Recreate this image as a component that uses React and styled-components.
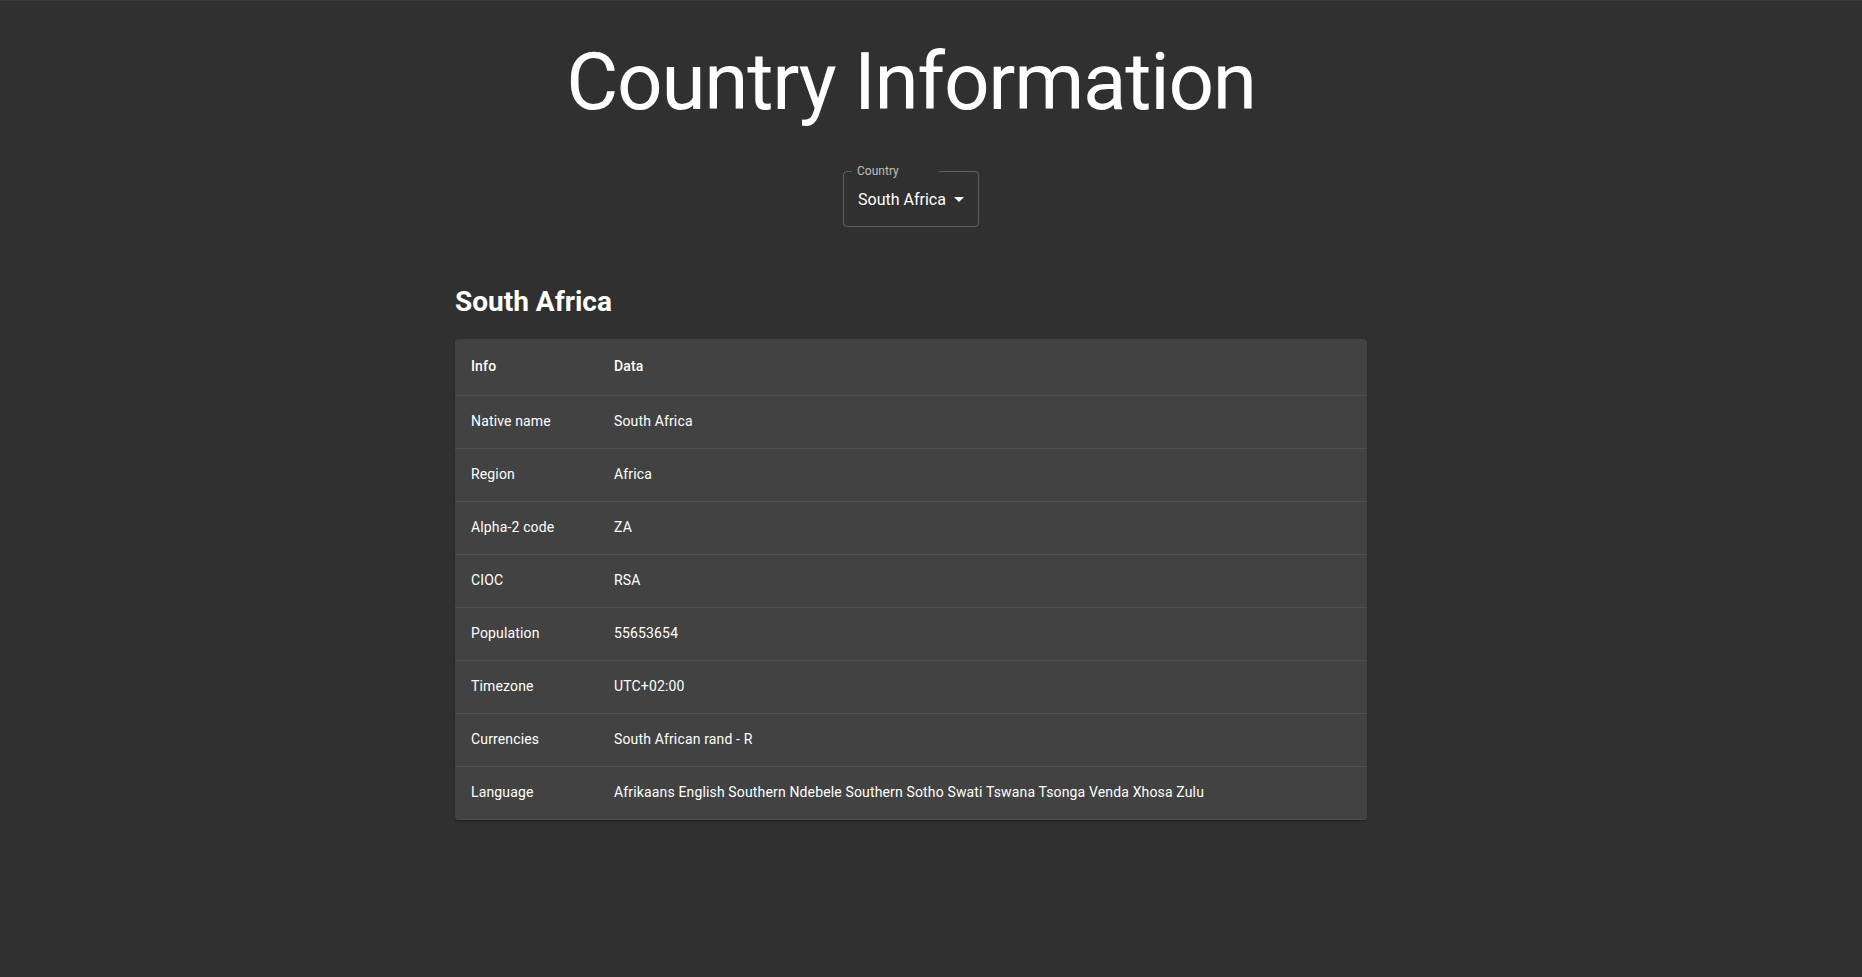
import React, { useState } from 'react'
import styled, { createGlobalStyle } from 'styled-components'

const GlobalStyle = createGlobalStyle`
  html, body {
    margin: 0;
    padding: 0;
    background: #303030;
  }
  body {
    font-family: Roboto, "Liberation Sans", Arial, sans-serif;
    color: #fff;
  }
`;

const countryInfo = [
  ['Native name', 'South Africa'],
  ['Region', 'Africa'],
  ['Alpha-2 code', 'ZA'],
  ['CIOC', 'RSA'],
  ['Population', '55653654'],
  ['Timezone', 'UTC+02:00'],
  ['Currencies', 'South African rand - R'],
  ['Language', 'Afrikaans English Southern Ndebele Southern Sotho Swati Tswana Tsonga Venda Xhosa Zulu'],
];

function App() {
  const [country] = useState('South Africa');

  return (
    <Page>
      <GlobalStyle />
      <Title>Country Information</Title>

      <SelectRow>
        <Select>
          <Label>Country</Label>
          <Value>{country}</Value>
          <Arrow viewBox="0 0 24 24">
            <path d="M7 10l5 5 5-5z" />
          </Arrow>
        </Select>
      </SelectRow>

      <Content>
        <CountryName>{country}</CountryName>
        <Card>
          <Table>
            <thead>
              <tr>
                <HeadCell>Info</HeadCell>
                <HeadCell>Data</HeadCell>
              </tr>
            </thead>
            <tbody>
              {countryInfo.map(([info, data]) => (
                <tr key={info}>
                  <Cell>{info}</Cell>
                  <Cell>{data}</Cell>
                </tr>
              ))}
            </tbody>
          </Table>
        </Card>
      </Content>
    </Page>
  )
}

const Page = styled.div`
  min-height: 976px;
  border-top: 1px solid #3a3a3a;
  padding-right: 40px;
  padding-bottom: 40px;
  box-sizing: border-box;
`;

const Title = styled.h1`
  margin: 33px 0 0;
  font-size: 80px;
  line-height: 96px;
  font-weight: 400;
  letter-spacing: -0.01562em;
  text-align: center;
`;

const SelectRow = styled.div`
  display: flex;
  justify-content: center;
  margin-top: 41px;
`;

const Select = styled.div`
  position: relative;
  display: flex;
  align-items: center;
  padding: 18px 32px 17px 14px;
  border: 1px solid rgba(255, 255, 255, 0.23);
  border-radius: 4px;
  cursor: pointer;

  &:hover {
    border-color: #fff;
  }
`;

const Label = styled.span`
  position: absolute;
  top: -7px;
  left: 8px;
  width: 87px;
  box-sizing: border-box;
  padding-left: 5px;
  background: #303030;
  font-size: 12px;
  line-height: 12px;
  color: rgba(255, 255, 255, 0.7);
`;

const Value = styled.span`
  font-size: 16px;
  line-height: 19px;
  color: #fff;
  white-space: nowrap;
`;

const Arrow = styled.svg`
  position: absolute;
  right: 7px;
  top: calc(50% - 12px);
  width: 24px;
  height: 24px;
  fill: #fff;
`;

const Content = styled.div`
  width: 912px;
  margin: 0 auto;
`;

const CountryName = styled.h2`
  margin: 58px 0 0;
  font-size: 28px;
  line-height: 1.2;
  font-weight: 700;
`;

const Card = styled.div`
  margin-top: 20px;
  background: #424242;
  border-radius: 4px;
  overflow: hidden;
  box-shadow: 0px 2px 1px -1px rgba(0, 0, 0, 0.2),
    0px 1px 1px 0px rgba(0, 0, 0, 0.14),
    0px 1px 3px 0px rgba(0, 0, 0, 0.12);
`;

const Table = styled.table`
  width: 100%;
  border-collapse: collapse;
  border-spacing: 0;
`;

const HeadCell = styled.th`
  padding: 15px 16px 17px;
  font-size: 14px;
  line-height: 24px;
  font-weight: 500;
  letter-spacing: 0.01071em;
  text-align: left;
  color: #fff;
  border-bottom: 1px solid #515151;

  &:first-child {
    width: 111px;
  }
`;

const Cell = styled.td`
  padding: 15px 16px 17px;
  font-size: 14px;
  line-height: 20px;
  font-weight: 400;
  letter-spacing: 0.01071em;
  text-align: left;
  color: #fff;
  border-bottom: 1px solid #515151;
  white-space: nowrap;
`;

export default App
